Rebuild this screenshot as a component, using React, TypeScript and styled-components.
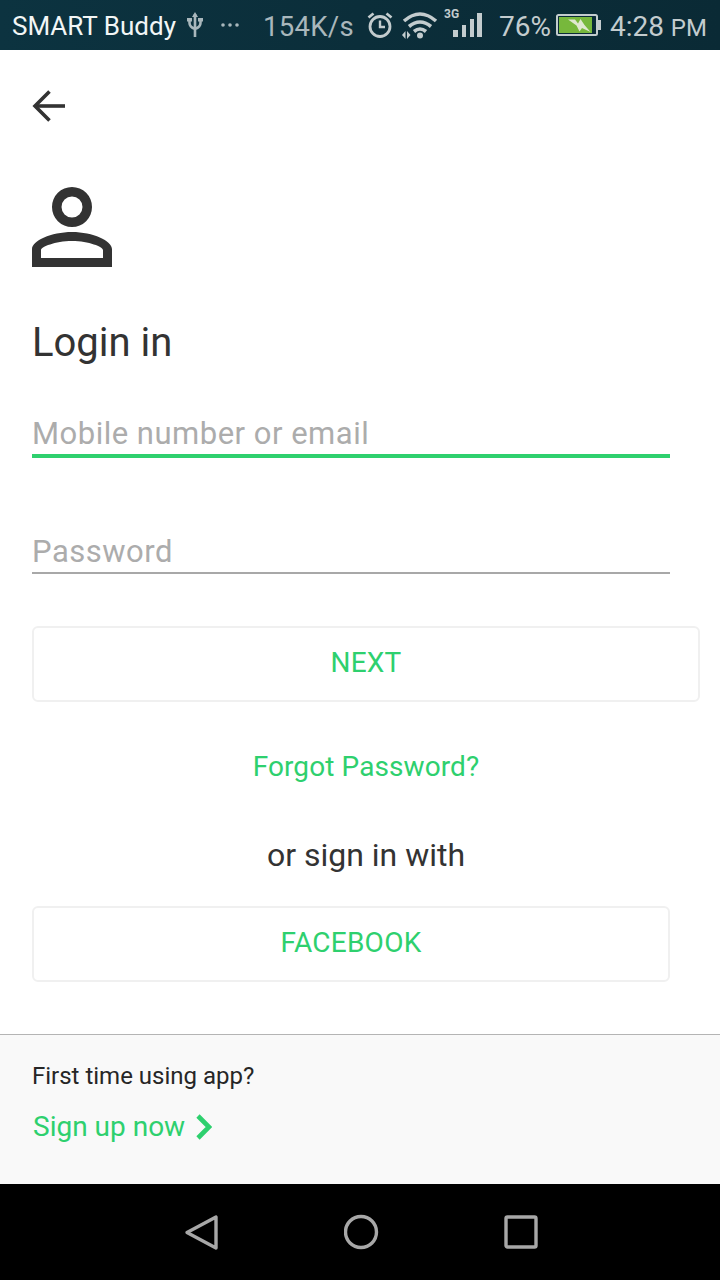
import React from "react";
import styled, { createGlobalStyle } from "styled-components";

const GREEN = "#2ed06e";
const INK = "#333333";

const Global = createGlobalStyle`
  html, body {
    margin: 0;
    padding: 0;
    background: #fff;
  }
  * {
    box-sizing: border-box;
  }
`;

const Screen = styled.div`
  width: 720px;
  height: 1280px;
  display: flex;
  flex-direction: column;
  overflow: hidden;
  font-family: Roboto, "Liberation Sans", sans-serif;
  color: ${INK};
`;

const StatusBar = styled.div`
  height: 50px;
  display: flex;
  align-items: center;
  padding-left: 12px;
  background: linear-gradient(90deg, #0c3340 0%, #0b2e3a 50%, #0a2a35 100%);
  color: #c3ccce;
`;

const StatusText = styled.span<{ $left?: number }>`
  padding-top: 2px;
  margin-left: ${(p) => p.$left ?? 0}px;
  font-size: 28px;
  white-space: nowrap;
`;

const Carrier = styled(StatusText)`
  font-size: 26px;
  color: #f2f6f6;
`;

const Speed = styled(StatusText)`
  font-size: 27.5px;
  color: #a9b7bc;
  letter-spacing: 0.3px;
`;

const Clock = styled(StatusText)`
  small {
    font-size: 24px;
  }
`;

const StatusIcon = styled.svg<{ $left?: number }>`
  display: block;
  flex: none;
  margin-left: ${(p) => p.$left ?? 0}px;
`;

const Main = styled.main`
  flex: 1;
  display: flex;
  flex-direction: column;
  padding: 40px 0 0 32px;
  background: #fff;
`;

const BackButton = styled.button`
  width: 34px;
  height: 32px;
  padding: 0;
  border: 0;
  background: none;
  display: block;
`;

const PersonIcon = styled.svg`
  display: block;
  width: 80px;
  height: 80px;
  margin-top: 65px;
`;

const Title = styled.h1`
  margin: 50px 0 0;
  font-size: 40px;
  line-height: 52px;
  font-weight: 400;
`;

const Field = styled.div<{ $active?: boolean; $top: number }>`
  width: 638px;
  margin-top: ${(p) => p.$top}px;
  height: ${(p) => (p.$active ? 50 : 47)}px;
  padding-top: 4px;
  display: flex;
  align-items: center;
  font-size: 31px;
  letter-spacing: 0.5px;
  color: #acacac;
  border-bottom: ${(p) => (p.$active ? `4px solid ${GREEN}` : "2px solid #a8a8a8")};
`;

const OutlineButton = styled.button<{ $wide?: boolean; $top: number }>`
  display: block;
  width: ${(p) => (p.$wide ? 668 : 638)}px;
  height: 76px;
  margin-top: ${(p) => p.$top}px;
  padding: 0 0 4px;
  background: #fff;
  border: 2px solid #f0f0f0;
  border-radius: 6px;
  color: ${GREEN};
  font: 400 28px Roboto, "Liberation Sans", sans-serif;
  letter-spacing: 0.25px;
`;

const ForgotLink = styled.a`
  display: block;
  width: 668px;
  margin-top: 46px;
  text-align: center;
  color: ${GREEN};
  font-size: 28px;
  line-height: 38px;
  letter-spacing: 0.1px;
`;

const OrLine = styled.div`
  width: 668px;
  margin-top: 48px;
  text-align: center;
  font-size: 32px;
  line-height: 42px;
`;

const SignUpPanel = styled.footer`
  height: 150px;
  padding: 24px 32px 0;
  background: #f9f9f9;
  border-top: 1px solid #b4b4b4;
`;

const FirstTime = styled.div`
  font-size: 24px;
  line-height: 34px;
  color: #262626;
`;

const SignUpLink = styled.a`
  display: flex;
  align-items: center;
  gap: 11px;
  margin: 17px 0 0 1px;
  color: ${GREEN};
  font-size: 28px;
  line-height: 34px;
`;

const NavBar = styled.nav`
  height: 96px;
  background: #000;
  display: flex;
  align-items: center;
  padding-left: 184px;
`;

const NavIcon = styled.svg<{ $left?: number }>`
  display: block;
  width: 36px;
  height: 36px;
  margin-left: ${(p) => p.$left ?? 0}px;
`;

export default function App() {
  return (
    <Screen>
      <Global />
      <StatusBar>
        <Carrier>SMART Buddy</Carrier>
        <StatusIcon $left={11} width="16" height="26" viewBox="0 0 16 26" fill="none" stroke="#a9b7bc" strokeWidth="2.600">
          <path d="M8 2v23M2.500 8v3q0 4 5.500 6q5.500-2 5.500-6V8" />
          <path d="M8 0l-3 5h6zM0 6h5v3.500H0zM11 6h5v3.500h-5z" fill="#a9b7bc" stroke="none" />
        </StatusIcon>
        <StatusIcon $left={17} width="20" height="6" viewBox="0 0 20 6" fill="#a9b7bc">
          <circle cx="3" cy="3" r="1.800" />
          <circle cx="10" cy="3" r="1.800" />
          <circle cx="17" cy="3" r="1.800" />
        </StatusIcon>
        <Speed $left={23}>154K/s</Speed>
        <StatusIcon $left={13} width="26" height="28" viewBox="0 0 26 28" fill="none" stroke="#c3ccce" strokeWidth="2.800">
          <circle cx="13" cy="15.500" r="10" />
          <path d="M13 9.500v6.500h5" strokeWidth="2.400" />
          <path d="M1.500 6.500l5-4M24.500 6.500l-5-4" />
        </StatusIcon>
        <StatusIcon $left={9} width="36" height="30" viewBox="0 0 36 30" fill="none" stroke="#c3ccce" strokeWidth="3.600">
          <path d="M2 11q16-14 32 0" />
          <path d="M7 16.500q11-9 22 0" />
          <path d="M12 21.500q6-5 12 0" />
          <circle cx="18" cy="25.500" r="3" fill="#c3ccce" stroke="none" />
          <path d="M0 25l3.500-4v8zM5 21l3.500 4-3.500 4z" fill="#c3ccce" stroke="none" />
        </StatusIcon>
        <StatusIcon $left={6} width="39" height="34" viewBox="0 0 39 34" fill="#c3ccce">
          <text x="0" y="10" fontFamily="Roboto, sans-serif" fontSize="12" fontWeight="700">3G</text>
          <rect x="9" y="22" width="5" height="7" />
          <rect x="18" y="17" width="4" height="12" />
          <rect x="26" y="11" width="4" height="18" />
          <rect x="33" y="5" width="5" height="24" />
        </StatusIcon>
        <StatusText $left={16}>76%</StatusText>
        <StatusIcon $left={5} width="46" height="22" viewBox="0 0 46 22">
          <rect x="1" y="1" width="40" height="20" rx="1.500" fill="none" stroke="#c3ccce" strokeWidth="2" />
          <rect x="3" y="3" width="33" height="16" fill="#77b83c" />
          <rect x="42" y="6" width="3" height="10" fill="#c3ccce" />
          <path d="M12 5.500h7l3 4 2.500-4.500 4 6 6 7-8.500-4-2.500 3.500-3-6z" fill="#dfe8d0" />
        </StatusIcon>
        <Clock $left={8}>
          4:28 <small>PM</small>
        </Clock>
      </StatusBar>

      <Main>
        <BackButton aria-label="Back">
          <svg width="34" height="32" viewBox="0 0 34 32" fill="none" stroke={INK} strokeWidth="3.600">
            <path d="M33 16H3" />
            <path d="M17.500 1.500L3 16l14.500 14.500" />
          </svg>
        </BackButton>
        <PersonIcon viewBox="0 0 80 80" fill={INK}>
          <path fillRule="evenodd" d="M40 0a20 20 0 1 1 0 40a20 20 0 0 1 0-40zm0 9.500a10.500 10.500 0 1 0 0 21a10.500 10.500 0 0 0 0-21z" />
          <path fillRule="evenodd" d="M0 80V62C0 54 19 45 40 45s40 9 40 17v18zM9 71h62v-8c0-3-14-9-31-9S9 60 9 63z" />
        </PersonIcon>
        <Title>Login in</Title>
        <Field $active $top={39}>Mobile number or email</Field>
        <Field $top={69}>Password</Field>
        <OutlineButton $wide $top={52}>NEXT</OutlineButton>
        <ForgotLink>Forgot Password?</ForgotLink>
        <OrLine>or sign in with</OrLine>
        <OutlineButton $top={30}>FACEBOOK</OutlineButton>
      </Main>

      <SignUpPanel>
        <FirstTime>First time using app?</FirstTime>
        <SignUpLink>
          Sign up now
          <svg width="16" height="26" viewBox="0 0 16 26" fill="none" stroke={GREEN} strokeWidth="4.600">
            <path d="M2 2l11 11L2 24" />
          </svg>
        </SignUpLink>
      </SignUpPanel>

      <NavBar>
        <NavIcon viewBox="0 0 36 36" fill="none" stroke="#a8a8a8" strokeWidth="3.400" strokeLinejoin="round">
          <path d="M32 3v31L3 18.500z" />
        </NavIcon>
        <NavIcon $left={124} viewBox="0 0 36 36" fill="none" stroke="#a8a8a8" strokeWidth="3.400">
          <circle cx="17" cy="18" r="15.500" />
        </NavIcon>
        <NavIcon $left={124} viewBox="0 0 36 36" fill="none" stroke="#a8a8a8" strokeWidth="3.400" strokeLinejoin="round">
          <rect x="2" y="3" width="30" height="30" rx="1.500" />
        </NavIcon>
      </NavBar>
    </Screen>
  );
}
